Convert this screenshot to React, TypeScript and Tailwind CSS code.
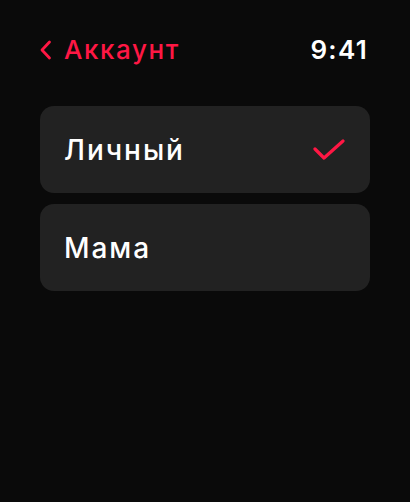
import React from 'react';

const font = { fontFamily: 'Inter, "Noto Sans", sans-serif' };

interface AccountRowProps {
  label: string;
  selected?: boolean;
}

const AccountRow: React.FC<AccountRowProps> = ({ label, selected = false }) => (
  <div className="flex h-[87px] items-center justify-between rounded-[14px] bg-[#222222] pl-[24px] pr-[25px]">
    <span className="text-[28px] font-medium leading-none tracking-[0.07em] text-white">{label}</span>
    {selected && (
      <svg width="32" height="24" viewBox="0 0 32 24" fill="none" className="text-[#ff1744]">
        <path d="M2 11l9 9L30 3" stroke="currentColor" strokeWidth="3.2" strokeLinecap="round" strokeLinejoin="round" />
      </svg>
    )}
  </div>
);

export default function App() {
  return (
    <div className="h-[502px] w-[410px] overflow-hidden bg-[#0a0a0a] pt-[32px]" style={font}>
      {/* Header */}
      <div className="flex h-[36px] items-center justify-between pl-[39px] pr-[42px]">
        <div className="flex items-center gap-[12px] text-[#ff1744]">
          <svg width="13" height="20" viewBox="0 0 13 20" fill="none">
            <path d="M10.5 2L3 10l7.5 8" stroke="currentColor" strokeWidth="2.8" strokeLinecap="round" strokeLinejoin="round" />
          </svg>
          <span className="text-[26px] font-medium leading-none tracking-[0.06em]">Аккаунт</span>
        </div>
        <span className="text-[26px] font-semibold leading-none tracking-[0.05em] text-white">9:41</span>
      </div>

      {/* Accounts */}
      <div className="mt-[38px] flex flex-col gap-[11px] px-[40px]">
        <AccountRow label="Личный" selected />
        <AccountRow label="Мама" />
      </div>
    </div>
  );
}
